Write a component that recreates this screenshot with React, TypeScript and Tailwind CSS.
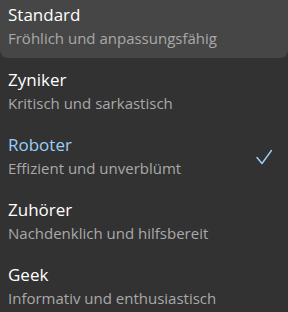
const items = [
  { title: "Standard", sub: "Fröhlich und anpassungsfähig" },
  { title: "Zyniker", sub: "Kritisch und sarkastisch" },
  { title: "Roboter", sub: "Effizient und unverblümt", selected: true },
  { title: "Zuhörer", sub: "Nachdenklich und hilfsbereit" },
  { title: "Geek", sub: "Informativ und enthusiastisch" },
];

export default function App() {
  return (
    <div
      className="w-[288px] h-[312px] overflow-hidden bg-[#323232] flex flex-col gap-[7px]"
      style={{ fontFamily: '"Open Sans", "Noto Sans", sans-serif' }}
    >
      {items.map((item, i) => (
        <div
          key={item.title}
          className={`h-[58px] shrink-0 flex items-start justify-between pl-2 pr-4 pt-1 ${
            i === 0 ? "bg-[#464646] rounded-b-lg" : ""
          }`}
        >
          <div className="flex flex-col">
            <span
              className={`text-[17px] leading-[22px] ${
                item.selected ? "text-[#9ccdf8]" : "text-white"
              }`}
            >
              {item.title}
            </span>
            <span className="text-[15px] leading-[24px] text-[#a9a9a9]">{item.sub}</span>
          </div>
          {item.selected && (
            <svg width="16" height="16" viewBox="0 0 16 16" fill="none" className="mt-[15px]">
              <path d="M1 8.5 6 14.5 15.5 1.5" stroke="#9ccdf8" strokeWidth="1.5" strokeLinecap="round" strokeLinejoin="round" />
            </svg>
          )}
        </div>
      ))}
    </div>
  );
}
